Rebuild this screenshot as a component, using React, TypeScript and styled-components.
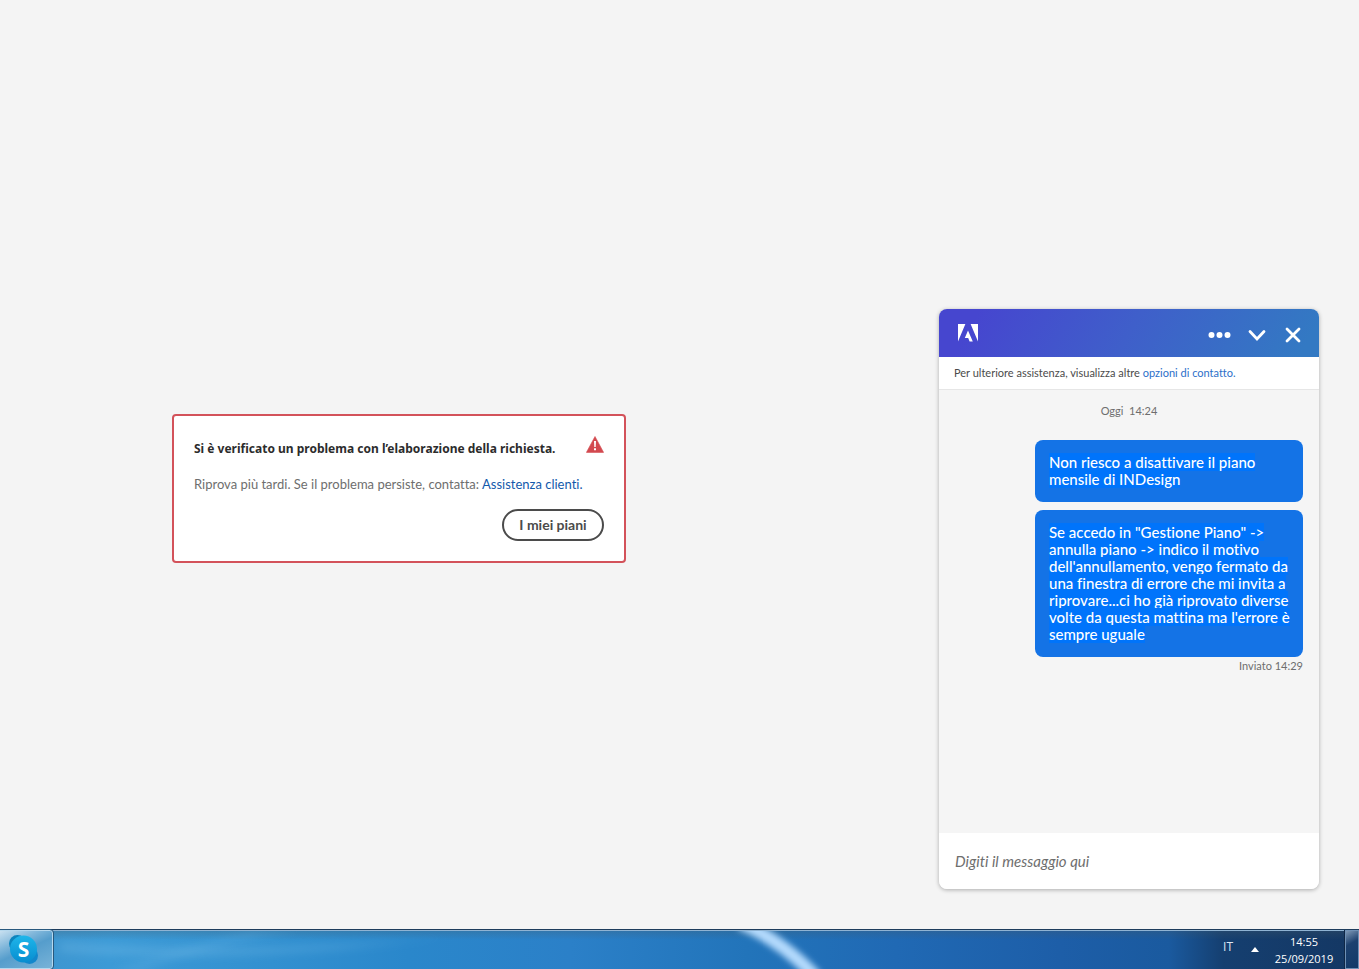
import React from "react";
import styled, { createGlobalStyle } from "styled-components";

const GlobalStyle = createGlobalStyle`
  *, *::before, *::after { box-sizing: border-box; }
  body {
    margin: 0;
    background: #f4f4f4;
    font-family: Lato, "Open Sans", sans-serif;
    font-variant-ligatures: none;
    color: #2c2c2c;
  }
  button, input { font-family: inherit; font-variant-ligatures: none; }
`;

const Screen = styled.div`
  min-height: 100vh;
  display: flex;
  flex-direction: column;
`;

const Main = styled.main`
  flex: 1;
  display: flex;
  gap: 141px;
  padding: 0 40px 40px 0;
`;

const Stage = styled.div`
  flex: 1;
  display: flex;
  align-items: center;
  justify-content: center;
  padding-top: 88px;
`;

const ErrorCard = styled.section`
  width: 454px;
  padding: 20px;
  border: 2px solid #d3525a;
  border-radius: 4px;
  background: #fff;
  display: flex;
  flex-direction: column;
`;

const CardHeader = styled.div`
  display: flex;
  justify-content: space-between;
  align-items: flex-start;
`;

const CardTitle = styled.h1`
  margin: 3px 0 0;
  font-family: "Noto Sans", "Open Sans", sans-serif;
  font-size: 12px;
  line-height: 20px;
  font-weight: 700;
`;

const CardText = styled.p`
  margin: 14px 0;
  font-size: 13px;
  line-height: 22px;
  color: #6e6e6e;
`;

const Link = styled.a<{ $color: string }>`
  color: ${(p) => p.$color};
  text-decoration: none;
`;

const PlansButton = styled.button`
  align-self: flex-end;
  width: 102px;
  height: 32px;
  padding: 0 0 2px;
  border: 2px solid #4b4b4b;
  border-radius: 16px;
  background: #fff;
  color: #4b4b4b;
  font-size: 14px;
  font-weight: 700;
`;

const Chat = styled.section`
  align-self: flex-end;
  width: 380px;
  height: 580px;
  display: flex;
  flex-direction: column;
  border-radius: 8px;
  overflow: hidden;
  background: #f5f5f5;
  box-shadow: 0 1px 4px rgba(0, 0, 0, 0.3);
`;

const ChatHeader = styled.header`
  height: 48px;
  padding: 0 16px 0 19px;
  display: flex;
  align-items: center;
  justify-content: space-between;
  background: linear-gradient(120deg, #4646cf 10%, #3f5fca 50%, #3379c3 95%);
`;

const ChatActions = styled.div`
  display: flex;
  gap: 17px;
  padding-top: 4px;
`;

const IconButton = styled.button`
  display: flex;
  padding: 0;
  border: 0;
  background: none;
  color: #fff;
`;

const Notice = styled.div`
  padding: 0 15px;
  border-bottom: 1px solid #e6e6e6;
  background: #fff;
  font-size: 11px;
  line-height: 32px;
  color: #4b4b4b;
`;

const Log = styled.div`
  flex: 1;
  padding: 12px 16px;
  display: flex;
  flex-direction: column;
  align-items: flex-end;
  gap: 8px;
`;

const Stamp = styled.div<{ $center?: boolean }>`
  align-self: ${(p) => (p.$center ? "center" : "flex-end")};
  margin: ${(p) => (p.$center ? "0 0 12px" : "-8px 0 0")};
  font-size: 11px;
  line-height: 18px;
  color: #6e6e6e;
  white-space: pre;
`;

const Bubble = styled.div`
  width: 268px;
  padding: 14px 8px 14px 14px;
  border-radius: 8px;
  background: #1473e6;
  color: #fff;
  font-size: 15px;
  line-height: 17px;
  font-weight: 500;
`;

const Marked = styled.span`
  background: #0074fb;
`;

const Composer = styled.input`
  height: 56px;
  padding: 0 16px;
  border: 0;
  background: #fff;
  font-size: 15px;
  font-style: italic;
  color: #4b4b4b;
  &::placeholder { color: #6e6e6e; opacity: 1; }
`;

const Taskbar = styled.footer`
  position: relative;
  height: 40px;
  display: flex;
  align-items: stretch;
  border-top: 1px solid #1d3c5c;
  box-shadow: inset 0 1px 0 #8fb3d3;
  color: #fff;
  font-family: "Open Sans", "Noto Sans", sans-serif;
  background:
    linear-gradient(180deg, rgba(70, 90, 100, 0.3), transparent 25%),
    linear-gradient(90deg, #3f93cb 0%, #3c9ad6 8%, #3290d0 20%, #2a87cb 30%, #2b80c8 42%, #2274ba 55%, #2069b4 66%, #1d5ea8 78%, #1a5a9f 86%, #153f70 90%, #143763 100%);
`;

const Backdrop = styled.svg`
  position: absolute;
  inset: 1px 0 0;
  width: 100%;
  height: 38px;
`;

const TaskButton = styled.button`
  position: relative;
  width: 53px;
  padding: 0 0 0 8px;
  display: flex;
  align-items: center;
  border: 1px solid #b5d8ee;
  border-left: 0;
  border-radius: 0 3px 3px 0;
  outline: 1px solid #28587d;
  outline-offset: 0;
  background: linear-gradient(155deg, #c8e0f0 0%, #7fb6da 30%, #559dcc 50%, #78b3d8 100%);
`;

const Tray = styled.div`
  position: relative;
  margin-left: auto;
  display: flex;
  align-items: center;
  line-height: 17px;
`;

const Language = styled.span`
  margin: 0 18px 6px 0;
  color: #dce6f2;
  font-size: 12px;
`;

const TrayArrow = styled.button`
  display: flex;
  padding: 0;
  margin-right: 14px;
  border: 0;
  background: none;
`;

const Clock = styled.time`
  width: 62px;
  margin-right: 10px;
  text-align: center;
  white-space: nowrap;
  font-size: 11px;
`;

const ShowDesktop = styled.button`
  align-self: stretch;
  width: 14px;
  padding: 0;
  border: 1px solid #6f90b5;
  box-shadow: -1px 0 0 #0f2746;
  background: linear-gradient(150deg, #7d97b5 0%, #1d416f 35%, #123968 100%);
`;

const AdobeLogo = () => (
  <svg width="20" height="18" viewBox="0 0 20 18" fill="#fff" aria-label="Adobe">
    <path d="M0 0h7.4L0 17.6zM12.6 0H20v17.6zM10 6.5l4.8 11.1h-3.2l-1.4-3.6H6.8z" />
  </svg>
);

const WarningIcon = () => (
  <svg width="18" height="17" viewBox="0 0 18 17" aria-hidden="true">
    <path d="M9 .5 17.6 16.4H.4z" fill="#d3494f" stroke="#d3494f" strokeWidth=".6" strokeLinejoin="round" />
    <path d="M8 5h2l-.3 6H8.3zM8 12.3h2v2H8z" fill="#fff" />
  </svg>
);

const SkypeIcon = () => (
  <svg width="32" height="32" viewBox="0 0 32 32" aria-hidden="true">
    <defs>
      <linearGradient id="skype" x1="0" y1="0" x2="0" y2="1">
        <stop offset="0" stopColor="#1fb6ea" />
        <stop offset="1" stopColor="#078dd0" />
      </linearGradient>
    </defs>
    <circle cx="9.5" cy="9.5" r="8.5" fill="#0b84bd" />
    <circle cx="21.5" cy="21.5" r="8.5" fill="#1187cc" />
    <circle cx="15.5" cy="15" r="13.5" fill="url(#skype)" />
    <text x="15.5" y="23" textAnchor="middle" fill="#fff" fontSize="21" fontWeight="700" fontFamily="Open Sans, sans-serif">S</text>
  </svg>
);

export default function App() {
  return (
    <>
      <GlobalStyle />
      <Screen>
        <Main>
          <Stage>
            <ErrorCard>
              <CardHeader>
                <CardTitle>Si è verificato un problema con l’elaborazione della richiesta.</CardTitle>
                <WarningIcon />
              </CardHeader>
              <CardText>
                Riprova più tardi. Se il problema persiste, contatta:{" "}
                <Link $color="#1259ab" href="#assistenza">Assistenza clienti.</Link>
              </CardText>
              <PlansButton>I miei piani</PlansButton>
            </ErrorCard>
          </Stage>

          <Chat>
            <ChatHeader>
              <AdobeLogo />
              <ChatActions>
                <IconButton aria-label="Altre opzioni">
                  <svg width="24" height="20" viewBox="0 0 24 20" fill="currentColor">
                    <circle cx="4.5" cy="10" r="3" />
                    <circle cx="12.5" cy="10" r="3" />
                    <circle cx="20.5" cy="10" r="3" />
                  </svg>
                </IconButton>
                <IconButton aria-label="Riduci">
                  <svg width="18" height="20" viewBox="0 0 18 20" fill="none" stroke="currentColor" strokeWidth="2.8" strokeLinecap="round">
                    <path d="M2 6.5l7 7.4 7-7.4" />
                  </svg>
                </IconButton>
                <IconButton aria-label="Chiudi">
                  <svg width="20" height="20" viewBox="0 0 20 20" fill="none" stroke="currentColor" strokeWidth="2.8" strokeLinecap="round">
                    <path d="M4 4l12 12M16 4L4 16" />
                  </svg>
                </IconButton>
              </ChatActions>
            </ChatHeader>
            <Notice>
              Per ulteriore assistenza, visualizza altre{" "}
              <Link $color="#2c6fc9" href="#contatto">opzioni di contatto.</Link>
            </Notice>
            <Log>
              <Stamp $center>{"Oggi  14:24"}</Stamp>
              <Bubble>
                <Marked>Non riesco a disattivare il piano<br />mensile di INDesign</Marked>
              </Bubble>
              <Bubble>
                <Marked>
                  Se accedo in "Gestione Piano" -&gt;<br />
                  annulla piano -&gt; indico il motivo<br />
                  dell'annullamento, vengo fermato da<br />
                  una finestra di errore che mi invita a<br />
                  riprovare...ci ho già riprovato diverse<br />
                  volte da questa mattina ma l'errore è<br />
                  sempre uguale
                </Marked>
              </Bubble>
              <Stamp>Inviato 14:29</Stamp>
            </Log>
            <Composer aria-label="Messaggio" placeholder="Digiti il messaggio qui" />
          </Chat>
        </Main>

        <Taskbar>
          <Backdrop viewBox="0 0 1359 38" preserveAspectRatio="none" aria-hidden="true">
            <defs>
              <filter id="soft" x="-20%" y="-50%" width="140%" height="200%">
                <feGaussianBlur stdDeviation="5" />
              </filter>
              <filter id="glow" x="-30%" y="-30%" width="160%" height="160%">
                <feGaussianBlur stdDeviation="3" />
              </filter>
            </defs>
            <path d="M140 40Q220 10 300 0h-50Q180 18 110 40z" fill="#7cc0ea" opacity=".22" filter="url(#soft)" />
            <path d="M60 12Q250 24 450 6L340 18Q180 30 60 20z" fill="#7cc0ea" opacity=".35" filter="url(#soft)" />
            <path d="M740 -8Q780 8 816 46" fill="none" stroke="#b4dafd" strokeWidth="13" filter="url(#glow)" />
          </Backdrop>
          <TaskButton aria-label="Skype">
            <SkypeIcon />
          </TaskButton>
          <Tray>
            <Language>IT</Language>
            <TrayArrow aria-label="Mostra icone nascoste">
              <svg width="8" height="5" viewBox="0 0 8 5"><path d="M4 0l4 5H0z" fill="#fff" /></svg>
            </TrayArrow>
            <Clock>14:55<br />25/09/2019</Clock>
            <ShowDesktop aria-label="Mostra desktop" />
          </Tray>
        </Taskbar>
      </Screen>
    </>
  );
}
